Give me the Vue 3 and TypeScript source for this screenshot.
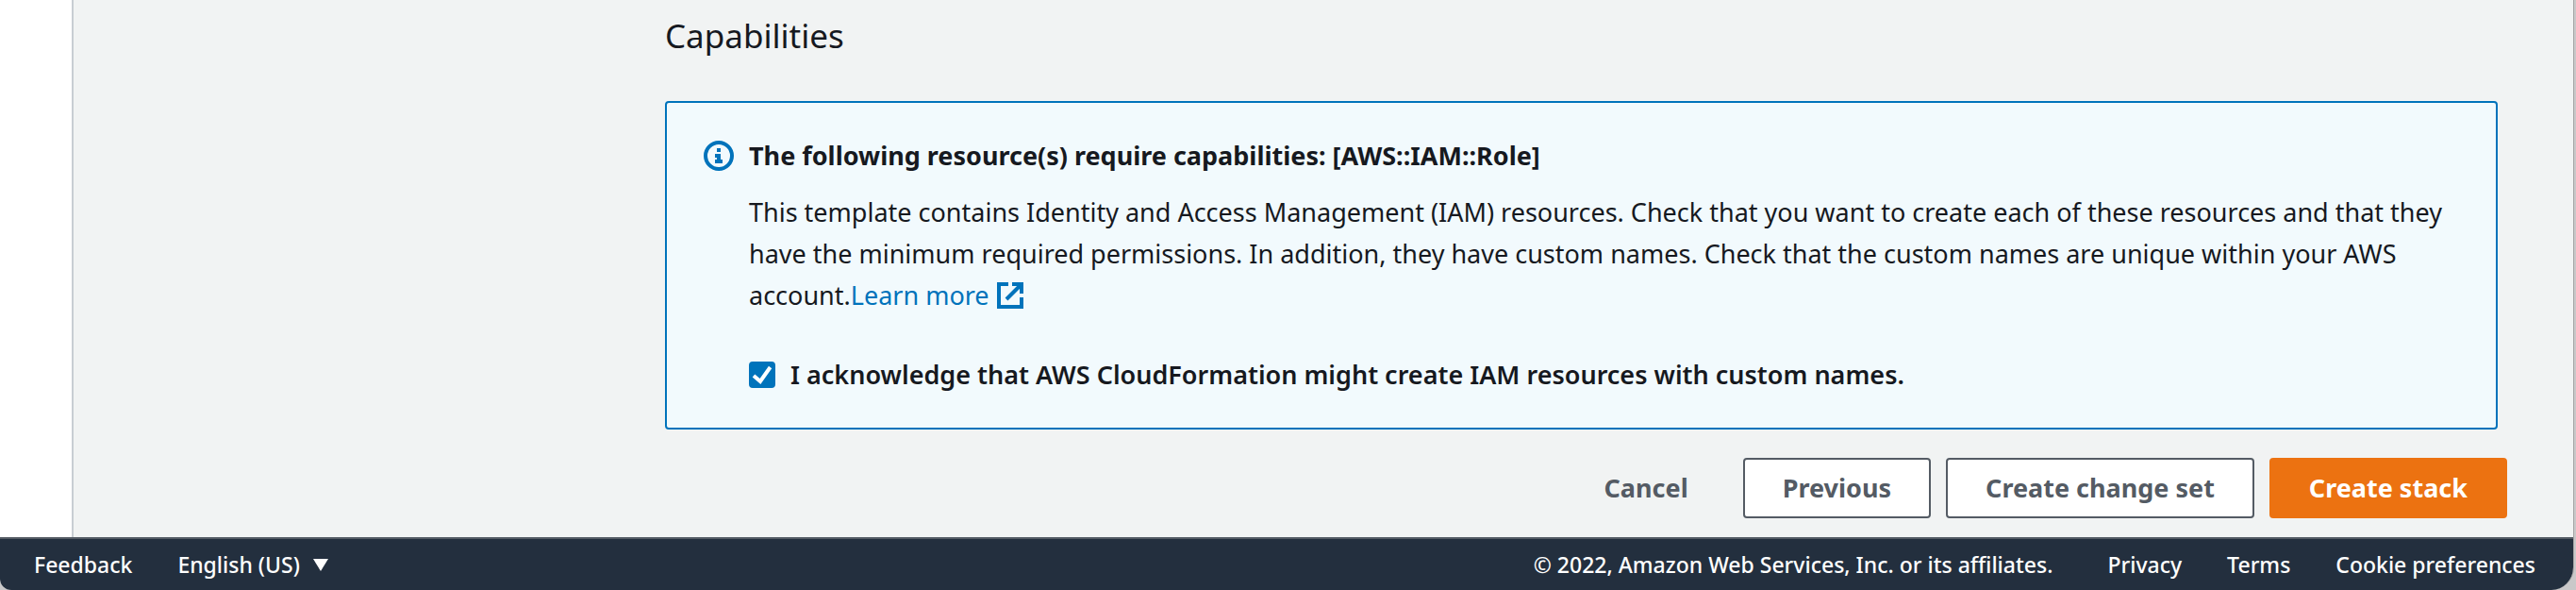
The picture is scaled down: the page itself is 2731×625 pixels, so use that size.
<script setup lang="ts">
import { ref } from 'vue'

const acknowledged = ref(true)
const footerLinks: string[] = ['Privacy', 'Terms', 'Cookie preferences']
</script>

<template>
  <div class="desktop">
    <div class="window">
      <div class="body">
        <aside class="sidebar"></aside>
        <main class="main">
          <h2 class="heading">Capabilities</h2>
          <section class="alert">
            <svg class="info-icon" viewBox="0 0 16 16" aria-hidden="true">
              <circle cx="8" cy="8" r="7" fill="none" stroke="currentColor" stroke-width="2" />
              <path d="M7 4h2v2H7zM6 7h3v3h1v2H6v-2h1V9H6z" fill="currentColor" />
            </svg>
            <div class="alert-content">
              <h3 class="alert-title">The following resource(s) require capabilities: [AWS::IAM::Role]</h3>
              <p class="alert-text">
                This template contains Identity and Access Management (IAM) resources. Check that you want to create each of these resources and that they have the minimum required permissions. In addition, they have custom names. Check that the custom names are unique within your AWS account.<a class="learn" href="#">Learn more<svg class="external-icon" viewBox="0 0 14 14" aria-hidden="true">
                  <path d="M6 1H1v12h12V8M8 1h5v5M13 1L5 9" fill="none" stroke="currentColor" stroke-width="2" />
                </svg></a>
              </p>
              <label class="ack" for="acknowledge">
                <input id="acknowledge" v-model="acknowledged" class="ack-box" type="checkbox" />
                <svg class="ack-tick" viewBox="0 0 14 14" aria-hidden="true">
                  <path d="M2.5 7.5l3.5 3L11.3 3" fill="none" stroke="#fff" stroke-width="2" />
                </svg>
                <span>I acknowledge that AWS CloudFormation might create IAM resources with custom names.</span>
              </label>
            </div>
          </section>
          <div class="actions">
            <button class="btn btn-link" type="button">Cancel</button>
            <button class="btn" type="button">Previous</button>
            <button class="btn" type="button">Create change set</button>
            <button class="btn btn-primary" type="button">Create stack</button>
          </div>
        </main>
      </div>
      <footer class="footer">
        <a class="footer-link" href="#">Feedback</a>
        <button class="language" type="button">
          English (US)
          <svg class="caret" viewBox="0 0 16 13" aria-hidden="true"><path d="M0 0h16L8 13z" fill="currentColor" /></svg>
        </button>
        <span class="copyright">© 2022, Amazon Web Services, Inc. or its affiliates.</span>
        <a v-for="link in footerLinks" :key="link" class="footer-link" href="#">{{ link }}</a>
      </footer>
    </div>
  </div>
</template>

<style>
body {
  margin: 0;
}
</style>

<style scoped>
.desktop {
  box-sizing: border-box;
  min-height: 100vh;
  display: flex;
  padding-right: 2px;
  background: #c9c8c9;
  font-family: "Noto Sans", "Open Sans", sans-serif;
  font-size: 27px;
  color: #16191f;
}
.window {
  flex: 1;
  display: flex;
  flex-direction: column;
  overflow: hidden;
  border-right: 1px solid #a5a5a5;
  border-radius: 0 0 24px 12px;
  background: #f1f3f3;
}
.body {
  flex: 1;
  display: flex;
}
.sidebar {
  flex: none;
  width: 76px;
  border-right: 2px solid #c8cdd3;
  background: #fff;
}
.main {
  flex: 1;
  padding: 14px 70px 20px 627px;
}
.heading {
  margin: 0;
  font-size: 35px;
  line-height: 48px;
  font-weight: 400;
}
.alert {
  display: flex;
  gap: 16px;
  margin: 45px 10px 0 0;
  padding: 34px 39px;
  border: 2px solid #0073bb;
  border-radius: 4px;
  background: #f2fafd;
}
.info-icon {
  flex: none;
  width: 32px;
  height: 32px;
  margin-top: 6px;
  color: #0073bb;
}
.alert-content {
  flex: 1;
  line-height: 44px;
}
.alert-title {
  margin: 0;
  font-size: 27px;
  font-weight: 700;
}
.alert-text {
  margin: 16px 0 40px;
}
.learn {
  color: #0073bb;
  text-decoration: none;
  white-space: nowrap;
}
.external-icon {
  width: 28px;
  height: 28px;
  margin-left: 8px;
  vertical-align: -4px;
}
.ack {
  display: grid;
  grid-template-columns: 28px 1fr;
  column-gap: 16px;
  align-items: center;
  font-weight: 600;
}
.ack-box {
  grid-area: 1 / 1;
  appearance: none;
  width: 28px;
  height: 28px;
  margin: 0;
  border: 2px solid #687078;
  border-radius: 4px;
  background: #fff;
}
.ack-box:checked {
  border-color: #0073bb;
  background: #0073bb;
}
.ack-tick {
  grid-area: 1 / 1;
  width: 28px;
  height: 28px;
  visibility: hidden;
  pointer-events: none;
}
.ack-box:checked + .ack-tick {
  visibility: visible;
}
.actions {
  display: flex;
  justify-content: flex-end;
  gap: 16px;
  margin-top: 30px;
}
.btn {
  padding: 8px 40px;
  border: 2px solid #545b64;
  border-radius: 4px;
  background: #fff;
  color: #545b64;
  font: inherit;
  font-weight: 700;
  line-height: 44px;
}
.btn-link {
  border-color: transparent;
  background: transparent;
}
.btn-primary {
  border-color: #ec7211;
  background: #ec7211;
  color: #fff;
}
.footer {
  display: flex;
  align-items: center;
  gap: 48px;
  padding: 10px 40px 10px 36px;
  border-top: 2px solid #545b64;
  background: #232f3e;
  color: #fff;
  font-size: 23px;
  font-weight: 500;
  line-height: 34px;
}
.footer-link {
  color: inherit;
  text-decoration: none;
}
.language {
  display: flex;
  align-items: center;
  gap: 14px;
  padding: 0;
  border: 0;
  background: none;
  color: inherit;
  font: inherit;
}
.caret {
  width: 16px;
  height: 13px;
}
.copyright {
  margin-left: auto;
  margin-right: 10px;
}
</style>
